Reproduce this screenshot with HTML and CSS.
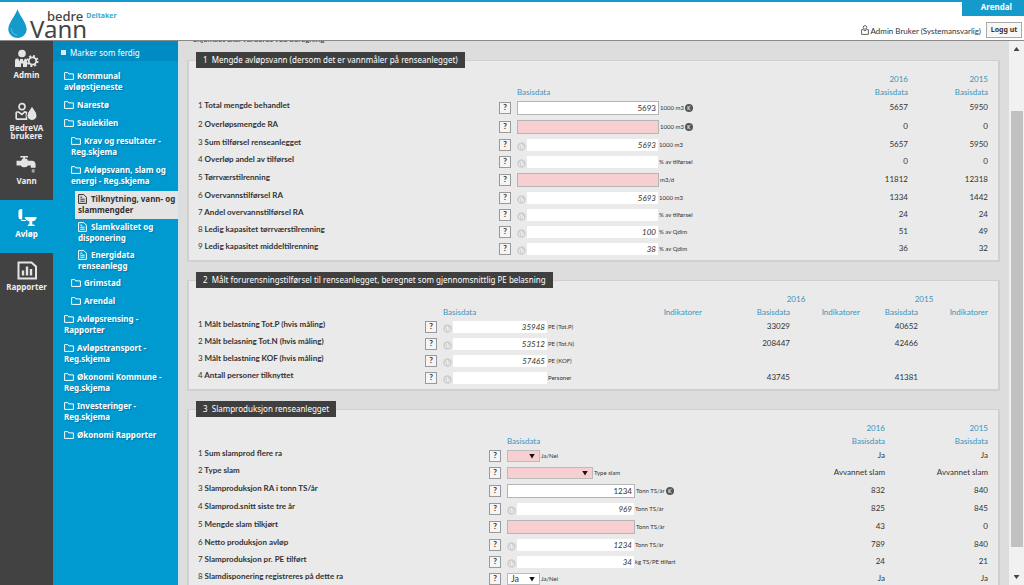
FILE: index.html
```html
<!DOCTYPE html>
<html lang="no">
<head>
<meta charset="utf-8">
<title>bedreVann</title>
<link rel="stylesheet" href="styles.css">
</head>
<body>
<svg class="defs" aria-hidden="true">
  <symbol id="folder" viewBox="0 0 10 8"><path d="M.6 7.4V.6h3.2l1 1.3h4.6v5.5z" fill="none" stroke="currentColor"/></symbol>
  <symbol id="doc" viewBox="0 0 9 10"><path d="M.6.6h5.2l2.6 2.6v6.2H.6zM2.3 3.2h2M2.3 5.2h4.4M2.3 7.2h4.4" fill="none" stroke="currentColor"/></symbol>
  <symbol id="calc" viewBox="0 0 9 9"><circle cx="4.5" cy="4.5" r="4.3" fill="#cfcfcf"/><path d="M2.5 6.8V4l2-2v4.800M5 7V3.500l1.500 1V7" fill="none" stroke="#f1f1f1" stroke-width=".8"/></symbol>
  <symbol id="k" viewBox="0 0 8 8"><circle cx="4" cy="4" r="4" fill="#555"/><path d="M3 2v4M5.500 2 3.300 4l2.200 2" fill="none" stroke="#eee" stroke-width=".9"/></symbol>
</svg>
<header class="top">
  <a class="logo" href="#">
    <svg class="drop" viewBox="0 0 19 30"><path d="M9.500 0C8.500 5 0 14.500 0 20.800 0 26 4.200 30 9.500 30S19 26 19 20.800C19 14.500 10.500 5 9.500 0z" fill="#149bcb"/><path d="M3 20c.2 4 3 6.600 6 7.300" fill="none" stroke="#4db9dd" stroke-width="1.200"/></svg>
    <span class="word"><span class="bedre">bedre <small>Deltaker</small></span><span class="vann">Vann</span></span>
  </a>
  <div class="account">
    <div class="place">Arendal</div>
    <div class="user">
      <svg class="person" viewBox="0 0 8 10"><path d="M4 .6a1.700 1.700 0 1 1 0 3.600 1.700 1.700 0 0 1 0-3.600zM2.300 4.600H.6v4.800h6.800V4.600H5.700L4 6z" fill="none" stroke="#555" stroke-width=".9"/></svg>
      <span>Admin Bruker (Systemansvarlig)</span>
      <button class="logout" type="button">Logg ut</button>
    </div>
  </div>
</header>
<div class="main">
  <nav class="modules">
    <a href="#"><svg viewBox="0 0 24 18"><g fill="#e4e4e4"><circle cx="7" cy="4" r="3.800"/><path d="M0 17.500V11q0-2 2-2h1l2 3v-2.500h3V12l2-3q2 0 2 2v6.500H8V14H6v3.500z"/></g><circle cx="17.500" cy="11.500" r="3.700" fill="none" stroke="#e4e4e4" stroke-width="1.800"/><circle cx="17.500" cy="11.500" r="5.100" fill="none" stroke="#e4e4e4" stroke-width="1.800" stroke-dasharray="2 2"/></svg>Admin</a>
    <a href="#"><svg viewBox="0 0 24 18"><path d="M7 1.200a3 3 0 1 1 0 6 3 3 0 0 1 0-6zM3.500 9.500H2q-.8 0-.8.8v5.500q0 .8.800.8h9.500V10L9.500 9.500 7 12z" fill="none" stroke="#e4e4e4" stroke-width="1.700"/><path d="M17 2.500c0 3-5 6.500-5 10.500a5 5 0 0 0 10 0c0-4-5-7.500-5-10.500z" fill="#e4e4e4" stroke="#424242"/></svg>BedreVA<br>brukere</a>
    <a href="#"><svg viewBox="0 0 24 20"><g fill="#e4e4e4"><path d="M5 1h8v1.600h-3V4h2l1 2h4q4 0 4 4v3.500h-5V11h-3q-1 2-4 2-2.500 0-3.500-2H1V6h5l1-2h1V2.600H5z"/><path d="M17 15h3v3.500h-3z" opacity=".6"/></g></svg>Vann</a>
    <a href="#" class="on"><svg viewBox="0 0 24 20"><g fill="#fff"><path d="M6 1q-3 0-3 3v5q0 3 3 3h1V1z"/><path d="M9.500 9.500H22v1q-.5 3-4.500 3.500V17q2.500.3 3 2h-8q.5-1.700 2-2v-3Q10.500 13.500 9.500 9.500z"/><path d="M5 12.500h6v1.300H7z"/></g></svg>Avløp</a>
    <a href="#"><svg viewBox="0 0 24 18"><path d="M3.500 1h13L21 5v12H3.500z" fill="none" stroke="#e4e4e4" stroke-width="2"/><path d="M8 14V9M12 14V5M16 14V7.500" stroke="#e4e4e4" stroke-width="2.400"/></svg>Rapporter</a>
  </nav>
  <aside class="tree">
    <label class="mark"><input type="checkbox">Marker som ferdig</label>
    <ul>
      <li><a href="#"><svg class="fi"><use href="#folder"/></svg>Kommunal<br>avløpstjeneste</a></li>
      <li><a href="#"><svg class="fi"><use href="#folder"/></svg>Narestø</a></li>
      <li><a href="#"><svg class="fi"><use href="#folder"/></svg>Saulekilen</a>
        <ul>
          <li><a href="#"><svg class="fi"><use href="#folder"/></svg>Krav og resultater -<br>Reg.skjema</a></li>
          <li><a href="#"><svg class="fi"><use href="#folder"/></svg>Avløpsvann, slam og<br>energi - Reg.skjema</a>
            <ul class="forms">
              <li><a href="#" class="sel"><svg class="di"><use href="#doc"/></svg>Tilknytning, vann- og<br>slammengder</a></li>
              <li><a href="#"><svg class="di"><use href="#doc"/></svg>Slamkvalitet og<br>disponering</a></li>
              <li><a href="#"><svg class="di"><use href="#doc"/></svg>Energidata<br>renseanlegg</a></li>
            </ul></li>
          <li><a href="#"><svg class="fi"><use href="#folder"/></svg>Grimstad</a></li>
          <li><a href="#"><svg class="fi"><use href="#folder"/></svg>Arendal</a></li>
        </ul></li>
      <li><a href="#"><svg class="fi"><use href="#folder"/></svg>Avløpsrensing -<br>Rapporter</a></li>
      <li><a href="#"><svg class="fi"><use href="#folder"/></svg>Avløpstransport -<br>Reg.skjema</a></li>
      <li><a href="#"><svg class="fi"><use href="#folder"/></svg>Økonomi Kommune -<br>Reg.skjema</a></li>
      <li><a href="#"><svg class="fi"><use href="#folder"/></svg>Investeringer -<br>Reg.skjema</a></li>
      <li><a href="#"><svg class="fi"><use href="#folder"/></svg>Økonomi Rapporter</a></li>
    </ul>
  </aside>
  <main class="content">
    <p class="intro">Skjemaet skal vurderes ved beregning</p>

    <fieldset class="s1">
      <legend>1&nbsp; Mengde avløpsvann (dersom det er vannmåler på renseanlegget)</legend>
      <table>
        <colgroup><col><col class="c-help"><col class="c-field"><col class="c-year"><col class="c-year"></colgroup>
        <thead>
          <tr><th></th><th></th><th></th><th>2016</th><th>2015</th></tr>
          <tr><th></th><th></th><th class="l">Basisdata</th><th>Basisdata</th><th>Basisdata</th></tr>
        </thead>
        <tbody>
          <tr class="edit"><td><label for="a1"><i>1</i> Total mengde behandlet</label></td><td><button class="help">?</button></td><td><div class="f"><input id="a1" value="5693"><span>1000 m3</span><svg class="k"><use href="#k"/></svg></div></td><td>5657</td><td>5950</td></tr>
          <tr class="edit"><td><label for="a2"><i>2</i> Overløpsmengde RA</label></td><td><button class="help">?</button></td><td><div class="f"><input id="a2" class="req"><span>1000 m3</span><svg class="k"><use href="#k"/></svg></div></td><td>0</td><td>0</td></tr>
          <tr><td><label for="a3"><i>3</i> Sum tilførsel renseanlegget</label></td><td><button class="help">?</button></td><td><div class="f"><svg class="c"><use href="#calc"/></svg><input id="a3" readonly value="5693"><span>1000 m3</span></div></td><td>5657</td><td>5950</td></tr>
          <tr><td><label for="a4"><i>4</i> Overløp andel av tilførsel</label></td><td><button class="help">?</button></td><td><div class="f"><svg class="c"><use href="#calc"/></svg><input id="a4" readonly><span>% av tilførsel</span></div></td><td>0</td><td>0</td></tr>
          <tr class="edit"><td><label for="a5"><i>5</i> Tørrværstilrenning</label></td><td><button class="help">?</button></td><td><div class="f"><input id="a5" class="req"><span>m3/d</span></div></td><td>11812</td><td>12318</td></tr>
          <tr><td><label for="a6"><i>6</i> Overvannstilførsel RA</label></td><td><button class="help">?</button></td><td><div class="f"><svg class="c"><use href="#calc"/></svg><input id="a6" readonly value="5693"><span>1000 m3</span></div></td><td>1334</td><td>1442</td></tr>
          <tr><td><label for="a7"><i>7</i> Andel overvannstilførsel RA</label></td><td><button class="help">?</button></td><td><div class="f"><svg class="c"><use href="#calc"/></svg><input id="a7" readonly><span>% av tilførsel</span></div></td><td>24</td><td>24</td></tr>
          <tr><td><label for="a8"><i>8</i> Ledig kapasitet tørrværstilrenning</label></td><td><button class="help">?</button></td><td><div class="f"><svg class="c"><use href="#calc"/></svg><input id="a8" readonly value="100"><span>% av Qdim</span></div></td><td>51</td><td>49</td></tr>
          <tr><td><label for="a9"><i>9</i> Ledig kapasitet middeltilrenning</label></td><td><button class="help">?</button></td><td><div class="f"><svg class="c"><use href="#calc"/></svg><input id="a9" readonly value="38"><span>% av Qdim</span></div></td><td>36</td><td>32</td></tr>
        </tbody>
      </table>
    </fieldset>

    <fieldset class="s2">
      <legend>2&nbsp; Målt forurensningstilførsel til renseanlegget, beregnet som gjennomsnittlig PE belasning</legend>
      <table>
        <colgroup><col><col class="c-help"><col class="c-field"><col class="c-ind"><col class="c-b"><col class="c-i"><col class="c-b"><col class="c-i"></colgroup>
        <thead>
          <tr><th></th><th></th><th></th><th></th><th colspan="2" class="m">2016</th><th colspan="2" class="m">2015</th></tr>
          <tr><th></th><th></th><th class="l">Basisdata</th><th class="gap">Indikatorer</th><th>Basisdata</th><th>Indikatorer</th><th>Basisdata</th><th>Indikatorer</th></tr>
        </thead>
        <tbody>
          <tr><td><label for="b1"><i>1</i> Målt belastning Tot.P (hvis måling)</label></td><td><button class="help">?</button></td><td><div class="f"><svg class="c"><use href="#calc"/></svg><input id="b1" readonly value="35948"><span>PE (Tot.P)</span></div></td><td></td><td>33029</td><td></td><td>40652</td><td></td></tr>
          <tr><td><label for="b2"><i>2</i> Målt belasning Tot.N (hvis måling)</label></td><td><button class="help">?</button></td><td><div class="f"><svg class="c"><use href="#calc"/></svg><input id="b2" readonly value="53512"><span>PE (Tot.N)</span></div></td><td></td><td>208447</td><td></td><td>42466</td><td></td></tr>
          <tr><td><label for="b3"><i>3</i> Målt belastning KOF (hvis måling)</label></td><td><button class="help">?</button></td><td><div class="f"><svg class="c"><use href="#calc"/></svg><input id="b3" readonly value="57465"><span>PE (KOF)</span></div></td><td></td><td></td><td></td><td></td><td></td></tr>
          <tr><td><label for="b4"><i>4</i> Antall personer tilknyttet</label></td><td><button class="help">?</button></td><td><div class="f"><svg class="c"><use href="#calc"/></svg><input id="b4" readonly><span>Personer</span></div></td><td></td><td>43745</td><td></td><td>41381</td><td></td></tr>
        </tbody>
      </table>
    </fieldset>

    <fieldset class="s3">
      <legend>3&nbsp; Slamproduksjon renseanlegget</legend>
      <table>
        <colgroup><col><col class="c-help"><col class="c-field"><col class="c-year"><col class="c-year"></colgroup>
        <thead>
          <tr><th></th><th></th><th></th><th>2016</th><th>2015</th></tr>
          <tr><th></th><th></th><th class="l">Basisdata</th><th>Basisdata</th><th>Basisdata</th></tr>
        </thead>
        <tbody>
          <tr><td><label for="d1"><i>1</i> Sum slamprod flere ra</label></td><td><button class="help">?</button></td><td><div class="f"><div class="drop-down short"><select id="d1" class="req"><option></option><option>Ja</option><option>Nei</option></select></div><span>Ja/Nei</span></div></td><td>Ja</td><td>Ja</td></tr>
          <tr><td><label for="d2"><i>2</i> Type slam</label></td><td><button class="help">?</button></td><td><div class="f"><div class="drop-down"><select id="d2" class="req"><option></option><option>Avvannet slam</option></select></div><span>Type slam</span></div></td><td>Avvannet slam</td><td>Avvannet slam</td></tr>
          <tr class="edit"><td><label for="d3"><i>3</i> Slamproduksjon RA i tonn TS/år</label></td><td><button class="help">?</button></td><td><div class="f"><input id="d3" value="1234"><span>Tonn TS/år</span><svg class="k"><use href="#k"/></svg></div></td><td>832</td><td>840</td></tr>
          <tr><td><label for="d4"><i>4</i> Slamprod.snitt siste tre år</label></td><td><button class="help">?</button></td><td><div class="f"><svg class="c"><use href="#calc"/></svg><input id="d4" readonly value="969"><span>Tonn TS/år</span></div></td><td>825</td><td>845</td></tr>
          <tr class="edit"><td><label for="d5"><i>5</i> Mengde slam tilkjørt</label></td><td><button class="help">?</button></td><td><div class="f"><input id="d5" class="req"><span>Tonn TS/år</span></div></td><td>43</td><td>0</td></tr>
          <tr><td><label for="d6"><i>6</i> Netto produksjon avløp</label></td><td><button class="help">?</button></td><td><div class="f"><svg class="c"><use href="#calc"/></svg><input id="d6" readonly value="1234"><span>Tonn TS/år</span></div></td><td>789</td><td>840</td></tr>
          <tr><td><label for="d7"><i>7</i> Slamproduksjon pr. PE tilført</label></td><td><button class="help">?</button></td><td><div class="f"><svg class="c"><use href="#calc"/></svg><input id="d7" readonly value="34"><span>kg TS/PE tilført</span></div></td><td>24</td><td>21</td></tr>
          <tr><td><label for="d8"><i>8</i> Slamdisponering registreres på dette ra</label></td><td><button class="help">?</button></td><td><div class="f"><div class="drop-down short"><select id="d8"><option>Ja</option><option>Nei</option></select></div><span>Ja/Nei</span></div></td><td>Ja</td><td>Ja</td></tr>
        </tbody>
      </table>
    </fieldset>
  </main>
  <div class="scrollbar" aria-hidden="true"><b class="up"></b><div class="track"><div class="thumb"></div></div><b class="down"></b></div>
</div>
</body>
</html>
```

FILE: styles.css
```css
* { box-sizing: border-box; }
body {
  margin: 0; height: 100vh; overflow: hidden;
  display: flex; flex-direction: column;
  background: #fff; color: #333;
  font: 8px/11px Lato, "Noto Sans", sans-serif;
}
a { color: inherit; text-decoration: none; }
.defs { display: none; }

.top {
  flex: none; height: 41px; display: flex; justify-content: space-between;
  border-top: 2px solid #149bcb; border-bottom: 1px solid #8a8a8a;
}
.logo { display: flex; gap: 3px; padding: 7px 0 0 8px; color: #444; font-family: "Noto Sans", sans-serif; }
.drop { width: 19px; height: 29px; }
.word { display: flex; flex-direction: column; }
.bedre { display: flex; align-items: center; gap: 3px; font-size: 13px; line-height: 14px; padding-left: 17px; font-weight: 500; }
.bedre small { font-size: 7px; font-weight: bold; color: #3aa9d2; }
.vann { font-size: 24px; line-height: 12px; }
.account { display: flex; flex-direction: column; align-items: flex-end; }
.place {
  width: 62px; height: 14px; padding-right: 12px; text-align: right;
  background: #149bcb; color: #fff; font: bold 8px/10px "Noto Sans", sans-serif;
}
.user { display: flex; align-items: center; gap: 2px; padding: 6px 2px 0 0; }
.user span { padding-top: 3px; }
.person { width: 8px; height: 10px; }
.logout {
  width: 36px; height: 16px; margin-left: 3px; padding: 0;
  border: 1px solid #aaa; background: #f7f7f7; color: #333; font: bold 7px/12px "Noto Sans", sans-serif;
}

.main { flex: 1; min-height: 0; display: flex; }
.modules { flex: none; width: 53px; background: #424242; }
.modules a {
  display: flex; flex-direction: column; align-items: center;
  height: 53px; padding-top: 8px; text-align: center;
  color: #eee; font: bold 8px/8px "Noto Sans", sans-serif;
}
.modules svg { width: 24px; height: 19px; margin-bottom: 3px; }
.modules .on { background: #0099d0; color: #fff; }

.tree { flex: none; width: 125px; background: #0099d0; color: #fff; font: bold 8px/11px "Noto Sans", sans-serif; }
.mark {
  display: flex; align-items: center; gap: 4px; height: 20px; padding: 2px 0 0 8px;
  background: #008bc3; font-weight: normal;
}
.mark input { appearance: none; width: 5px; height: 5px; margin: 0; background: #d9edf6; }
.tree ul { list-style: none; margin: 0; padding: 0; }
.tree > ul { padding: 7px 0 0 8px; }
.tree ul ul { padding-left: 7px; }
.tree a { display: block; padding: 2px 0 5px 3px; white-space: nowrap; text-shadow: 1px 1px 1px #0077a5; }
.tree .forms a { padding-bottom: 4px; }
.tree .sel { background: #e4e4e4; color: #333; text-shadow: none; }
.fi { width: 10px; height: 8px; margin-right: 3px; vertical-align: -1px; }
.di { width: 9px; height: 10px; margin-right: 4px; vertical-align: -2px; }

.content {
  flex: 1; min-width: 0; overflow: hidden; padding: 0 9px 0 8px;
  background: #ddd; border-left: 1px solid #cfdde4;
}
.intro { margin: -7px 0 7px 6px; }
fieldset { min-width: 0; margin: 0 0 10px; padding: 4px 10px 3px 7px; border: 2px solid #d0d0d0; border-top-width: 1px; background: #eaeaea; }
legend { height: 16px; padding: 0 7px; background: #3f3f3f; color: #fff; font: 8px/15px "Noto Sans", sans-serif; }
table { width: 100%; table-layout: fixed; border-collapse: collapse; }
th, td { padding: 0; text-align: right; white-space: nowrap; }
th { height: 13px; padding-top: 2px; color: #3c94bd; font-weight: normal; }
th.l, td:first-child { text-align: left; }
th.m { text-align: center; }
th.gap { padding-right: 30px; }
tbody tr { height: 17px; }
tbody tr.edit { height: 19px; }
td:first-child { vertical-align: top; padding-left: 2px; }
td:nth-child(2), td:nth-child(3) { text-align: left; }
td label { display: block; padding-top: 1px; font-weight: bold; }
.edit label { padding-top: 2px; }
td i { font-style: normal; font-weight: normal; }
.c-help { width: 18px; }
.s1 .c-field { width: 311px; }
.s1 .c-year { width: 80px; }
.s2 .c-field { width: 159px; }
.s2 .c-ind { width: 130px; }
.s2 .c-b { width: 58px; }
.s2 .c-i { width: 70px; }
.s3 .c-field { width: 275px; }
.s3 .c-year { width: 103px; }

.help {
  display: block; width: 12px; height: 12px; padding: 0;
  border: 1px solid #999; background: #f5f5f5; color: #333; font: bold 8px/9px Lato, sans-serif;
}
.f { display: flex; align-items: center; gap: 1px; font-size: 6px; line-height: 12px; }
.f input {
  width: 142px; height: 14px; padding: 0 2px; border: 1px solid #b5b5b5; border-radius: 0;
  background: #fff; color: #333; text-align: right; font: 8px Lato, sans-serif;
}
.f input[readonly] { width: 131px; height: 12px; border: 0; font-style: italic; }
.s2 .f input[readonly] { width: 94px; }
.s3 .f input { width: 128px; }
.s3 .f input[readonly] { width: 117px; }
.f .req { background: #f8cfd1; }
.c { width: 9px; height: 9px; margin-top: 3px; }
.k { width: 8px; height: 8px; }
.drop-down { position: relative; width: 86px; height: 12px; }
.drop-down.short { width: 33px; }
.drop-down select {
  display: block; appearance: none; width: 100%; height: 12px; padding: 0 3px;
  border: 1px solid #bbb; border-radius: 0; background: #fff; color: #333; font: 9px/10px Lato, sans-serif;
}
.drop-down .req { background: #f8cfd1; }
.drop-down::after {
  content: ""; position: absolute; right: 5px; top: 4px; width: 6px; height: 5px;
  background: #111; clip-path: polygon(0 0, 100% 0, 50% 100%); pointer-events: none;
}

.scrollbar { flex: none; width: 15px; display: flex; flex-direction: column; align-items: center; background: #f1f1f1; }
.scrollbar b { width: 6px; height: 4px; margin: 6px 0; background: #444; clip-path: polygon(0 0, 100% 0, 50% 100%); }
.scrollbar .up { clip-path: polygon(50% 0, 100% 100%, 0 100%); }
.track { flex: 1; width: 12px; padding: 54px 0 22px; display: flex; }
.thumb { flex: 1; background: #c1c1c1; }
```
